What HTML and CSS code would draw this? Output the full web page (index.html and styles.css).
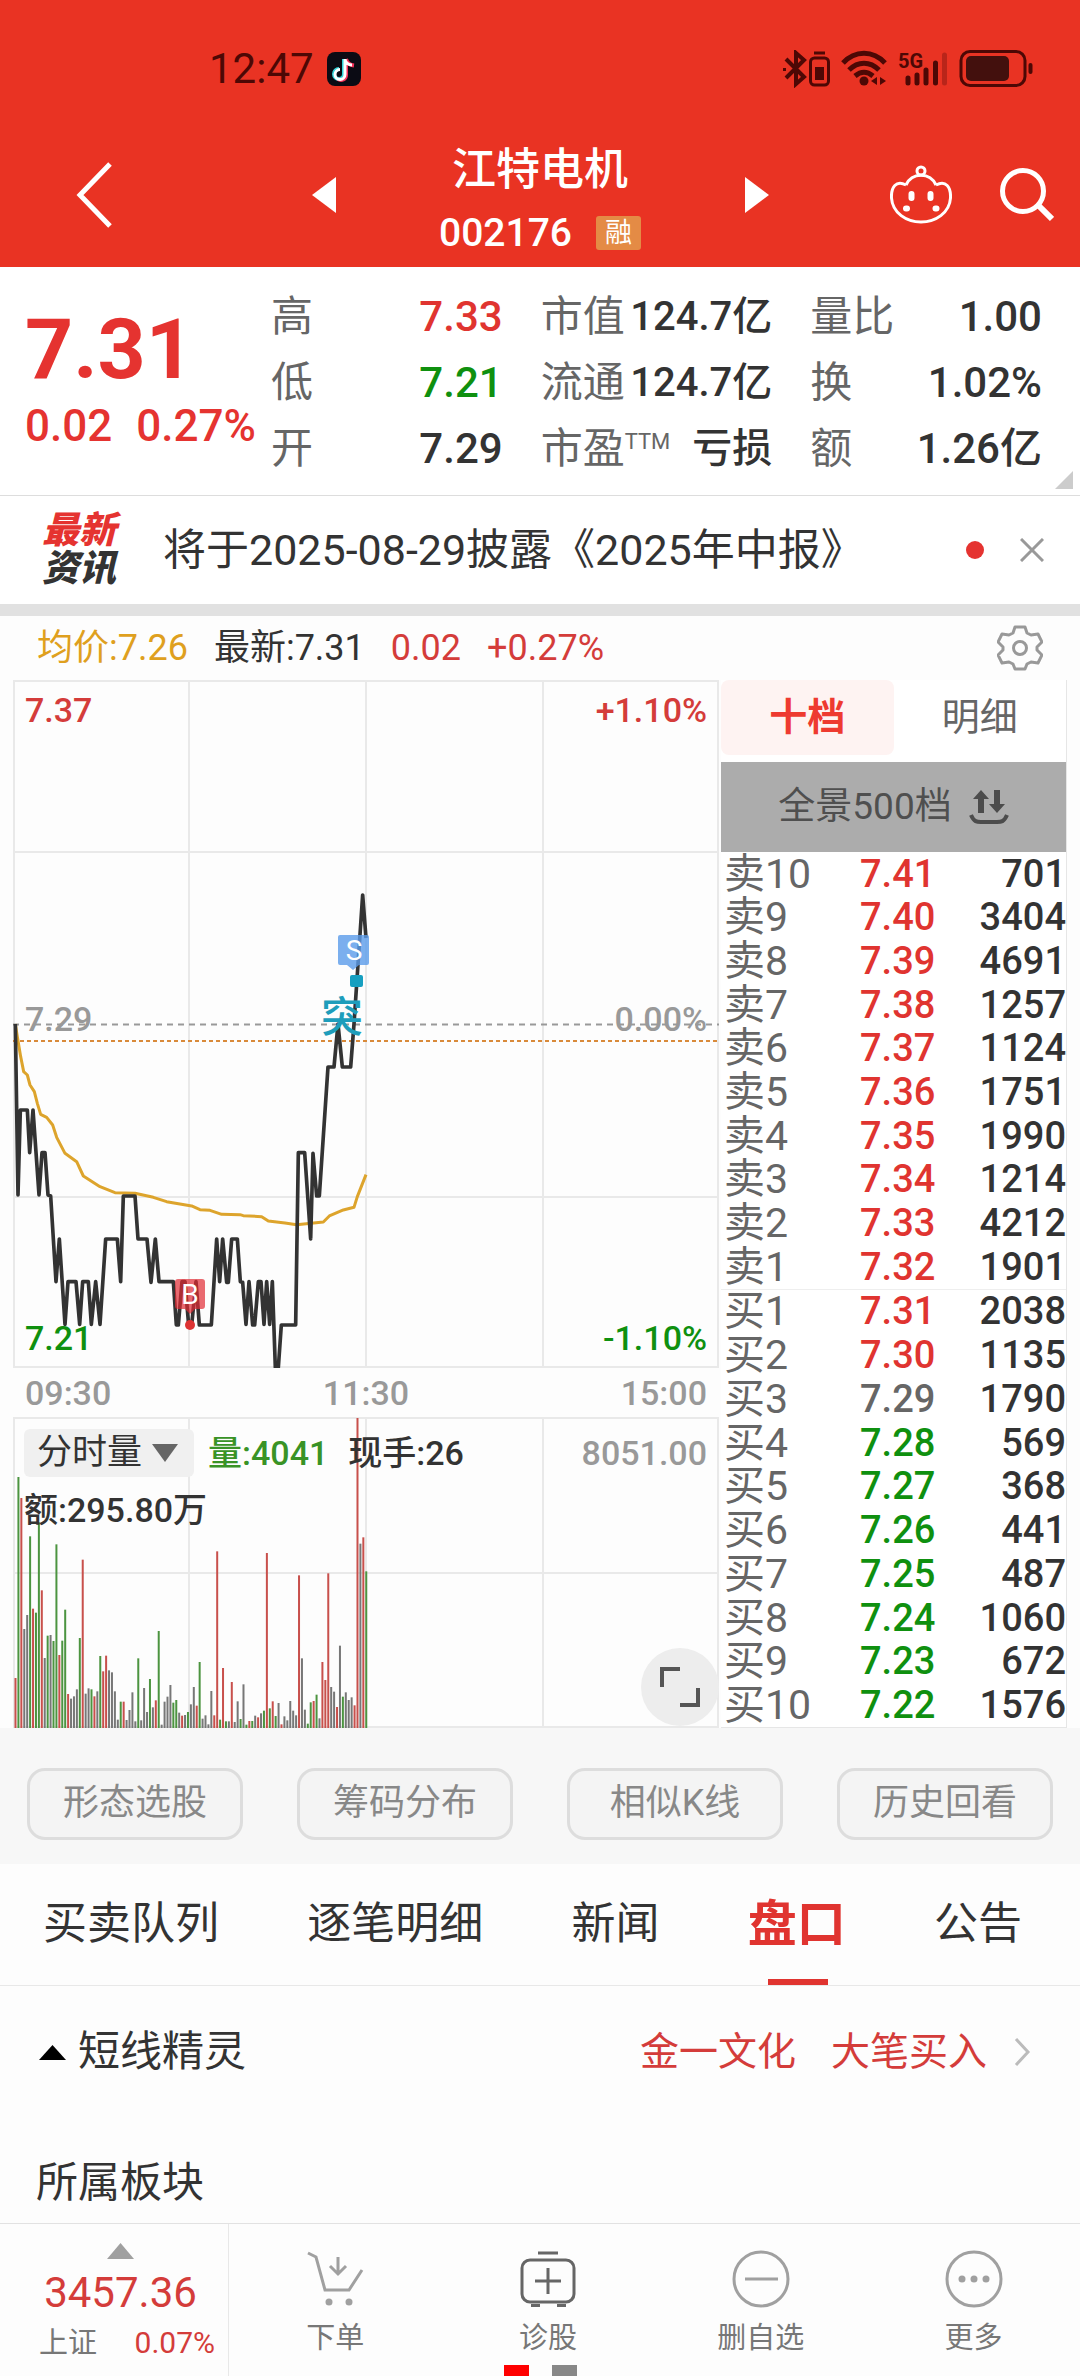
FILE: index.html
```html
<!DOCTYPE html>
<html lang="zh-CN">
<head>
<meta charset="utf-8">
<meta name="viewport" content="width=device-width, initial-scale=1">
<title>江特电机 002176</title>
<link rel="stylesheet" href="styles.css">
</head>
<body>
<header class="top">
  <div class="status">
    <div class="status-left">
      <span>12:47</span>
      <svg width="34" height="34" viewBox="0 0 34 34"><rect width="34" height="34" rx="8" fill="#0b0b14"/><g fill="none" stroke-width="4"><path d="M17 7v15a5 5 0 1 1-5-5" stroke="#35d6dc"/><path d="M19 7c1 4 4 6 8 6.500M19 8v15a5 5 0 0 1-8 4" stroke="#f5325b"/><path d="M18 7v15.500a5 5 0 1 1-5-5M18 7c0 4 4 6 7 6" stroke="#fff" stroke-width="3"/></g></svg>
    </div>
    <svg class="status-icons" width="250" height="38" viewBox="0 0 250 38" fill="none" stroke="#4d0805" stroke-width="4">
      <path d="M3 9l18 18-8 7V3l8 7L3 28M1 18v3" />
      <path d="M31 3h11" stroke-width="3"/><rect x="27.500" y="8" width="18" height="27" rx="4" stroke-width="3"/><rect x="32" y="17" width="9" height="13" fill="#4d0805" stroke="none"/>
      <path d="M60 13c12-13 30-13 42 0M66 20c9-9 21-9 30 0M72 26c6-5 12-5 18 0" stroke-width="5"/><circle cx="81" cy="31" r="4.500" fill="#4d0805" stroke="none"/><path d="M94 27v8l-6-4zM97 27v8l6-4z" fill="#4d0805" stroke="none"/>
      <text x="115" y="18" class="net">5G</text>
      <g stroke-linecap="round" stroke-width="5"><path d="M125 28v5M134 25v8M143 20v13M152.500 13v20"/><path d="M161.500 5v28" opacity=".3"/></g>
      <rect x="178" y="1.500" width="64" height="34" rx="9" stroke-width="3"/><rect x="183" y="6" width="43" height="25" rx="5" fill="#43100d" stroke="none"/><path d="M247.500 15v7" stroke-linecap="round"/>
    </svg>
  </div>
  <div class="titlebar">
    <button class="icon-btn back" aria-label="返回"><svg width="38" height="66" viewBox="0 0 38 66"><path d="M34 2L4 33l30 31" fill="none" stroke="#fff" stroke-width="5"/></svg></button>
    <div class="stock">
      <button class="icon-btn" aria-label="上一只"><svg width="24" height="36" viewBox="0 0 24 36"><path d="M24 0v36L0 18z" fill="#fff"/></svg></button>
      <div class="stock-name">
        <h1>江特电机</h1>
        <p><span>002176</span><em>融</em></p>
      </div>
      <button class="icon-btn" aria-label="下一只"><svg width="24" height="36" viewBox="0 0 24 36"><path d="M0 0v36l24-18z" fill="#fff"/></svg></button>
    </div>
    <div class="actions">
      <button class="icon-btn" aria-label="助手"><svg width="62" height="60" viewBox="0 0 62 60" fill="none" stroke="#fff" stroke-width="3"><circle cx="31" cy="6" r="4"/><path d="M16 20c6-13 24-13 30 0M16 20C6 15 1 22 1.500 33c1 15 15 24 29.500 24s28.500-9 29.500-24C61 22 56 15 46 20"/><g stroke-linecap="round" stroke-width="6"><path d="M21.500 29v4M40.500 29v4M16 43.500h1M45.500 43.500h1"/></g></svg></button>
      <button class="icon-btn" aria-label="搜索"><svg width="54" height="55" viewBox="0 0 54 55" fill="none" stroke="#fff" stroke-width="5"><circle cx="23" cy="24" r="20.500"/><path d="M38 38l14 14" stroke-width="6"/></svg></button>
    </div>
  </div>
</header>

<section class="quote">
  <div class="price">
    <strong>7.31</strong>
    <p><span>0.02</span><span>0.27%</span></p>
  </div>
  <dl class="stats">
    <div><dt>高</dt><dd class="up">7.33</dd></div>
    <div class="cap"><dt>市值</dt><dd>124.7亿</dd></div>
    <div><dt>量比</dt><dd>1.00</dd></div>
    <div><dt>低</dt><dd class="down">7.21</dd></div>
    <div class="cap"><dt>流通</dt><dd>124.7亿</dd></div>
    <div><dt>换</dt><dd>1.02%</dd></div>
    <div><dt>开</dt><dd>7.29</dd></div>
    <div class="cap"><dt>市盈<sup>TTM</sup></dt><dd>亏损</dd></div>
    <div><dt>额</dt><dd>1.26亿</dd></div>
  </dl>
  <i class="corner"></i>
</section>

<section class="news">
  <div class="news-logo"><b>最新</b><span>资讯</span></div>
  <a href="#">将于2025-08-29披露《2025年中报》</a>
  <i class="dot"></i>
  <button class="icon-btn" aria-label="关闭"><svg width="24" height="24" viewBox="0 0 24 24"><path d="M1 1l22 22M23 1L1 23" stroke="#999" stroke-width="3"/></svg></button>
</section>

<section class="info">
  <span class="avg">均价:7.26</span><span>最新:7.31</span><span class="up2">0.02</span><span class="up2">+0.27%</span>
  <button class="icon-btn gear" aria-label="设置"><svg width="46" height="46" viewBox="0 0 46 46" fill="none" stroke="#999" stroke-width="3" stroke-linejoin="round"><path d="M18 2h10l2 6 4 2 7-1 4 8-5 5v3l5 5-4 8-7-1-4 2-2 5H18l-2-5-4-2-7 1-4-8 5-5v-3l-5-5 4-8 7 1 4-2z"/><circle cx="23" cy="23" r="6.500"/></svg></button>
</section>

<main class="market">
  <div class="charts">
    <div class="plot">
      <svg viewBox="0 0 706 688">
        <g fill="none" stroke="#e9e9e9" stroke-width="2"><path d="M1 1h704v686H1zM176 0v688M353 0v688M530 0v688M0 172h706M0 517h706"/></g>
        <path d="M0 344.500h706" stroke="#999" stroke-width="2" stroke-dasharray="6 5"/>
        <path d="M0 361h706" stroke="#d98a3a" stroke-width="2" stroke-dasharray="4 3"/>
        <g transform="scale(.33333) translate(-39 960)" fill="none" stroke-linejoin="round">
          <polyline stroke="#dda42c" stroke-width="9" points="46,72 52,110 62,170 71,215 82,225 90,255 103,275 112,310 122,343 140,352 158,375 170,412 195,460 230,485 250,528 300,560 345,578 405,580 460,592 500,605 575,618 600,629 630,631 665,643 720,644 730,647 785,650 805,663 855,669 890,674 970,666 988,648 1030,630 1062,622 1072,590 1098,524"/>
          <polyline stroke="#333" stroke-width="11" points="46,72 54,585 61,330 82,330 89,458 99,330 117,585 126,458 135,458 144,585 152,588 168,845 178,717 195,973 204,845 228,845 239,973 248,845 265,845 274,973 287,845 300,973 317,717 352,717 362,845 370,588 405,588 414,717 441,717 453,847 466,717 477,845 520,845 529,975 535,975 546,845 555,845 566,975 575,975 588,845 598,975 634,975 650,717 659,845 668,717 680,847 685,847 695,717 712,717 721,845 728,847 738,973 747,845 758,975 764,975 775,845 783,845 792,973 800,845 809,973 817,845 826,1102 835,1102 844,975 887,975 895,458 914,458 932,717 939,460 950,588 958,588 984,201 1002,201 1014,72 1027,201 1052,201 1062,72 1088,-315 1098,-186"/>
        </g>
        <path d="M327 255h27q2 0 2 2v26q0 2-2 2h-8l-6 5-6-5h-7q-2 0-2-2v-26q0-2 2-2z" fill="#5a9bea" opacity=".8"/>
        <text x="341" y="280" class="flag">S</text>
        <rect x="337" y="295" width="13" height="12" rx="2" fill="#169fc0"/>
        <text x="329" y="352" class="breakout">突</text>
        <path d="M165 599h24q3 0 3 3v24q0 3-3 3h-7l-5 5-5-5h-7q-3 0-3-3v-24q0-3 3-3z" fill="#e02b33" opacity=".7"/>
        <text x="177" y="624" class="flag">B</text>
        <circle cx="177" cy="645" r="5" fill="#d33"/>
      </svg>
      <div class="scale">
        <div class="up2"><b>7.37</b><b>+1.10%</b></div>
        <div class="mid"><b>7.29</b><b>0.00%</b></div>
        <div class="down"><b>7.21</b><b>-1.10%</b></div>
      </div>
    </div>
    <div class="times"><span>09:30</span><span>11:30</span><span>15:00</span></div>
    <div class="plot">
      <svg id="volume" viewBox="0 0 706 311">
        <path d="M1 1h704v309H1zM176 0v311M353 0v311M530 0v311M0 156h706" fill="none" stroke="#e9e9e9" stroke-width="2"/>
      </svg>
      <div class="vol-info">
        <div class="vol-line">
          <button class="vol-pick">分时量<svg width="26" height="18" viewBox="0 0 26 18"><path d="M0 0h26L13 18z" fill="#666"/></svg></button>
          <span class="vol-num">量:4041</span><span>现手:26</span><span class="vol-max">8051.00</span>
        </div>
        <div class="vol-amount">额:295.80万</div>
        <button class="expand" aria-label="全屏"><svg width="40" height="40" viewBox="0 0 40 40"><path d="M2 20V2h18M38 21v17H20" fill="none" stroke="#555" stroke-width="4"/></svg></button>
      </div>
    </div>
  </div>

  <div class="book">
    <div class="book-tabs"><button class="on">十档</button><button>明细</button></div>
    <button class="depth">全景500档<svg width="40" height="36" viewBox="0 0 40 36"><path d="M12 1l8 9h-5v14H9V10H4zM28 24l8-9h-5V1h-6v14h-5z" fill="#4c4c4c"/><path d="M2 26c3 7 6 7 10 7h16c4 0 7 0 10-7" fill="none" stroke="#4c4c4c" stroke-width="4"/></svg></button>
    <table>
      <tbody class="asks">
        <tr><th>卖10</th><td class="up">7.41</td><td>701</td></tr>
        <tr><th>卖9</th><td class="up">7.40</td><td>3404</td></tr>
        <tr><th>卖8</th><td class="up">7.39</td><td>4691</td></tr>
        <tr><th>卖7</th><td class="up">7.38</td><td>1257</td></tr>
        <tr><th>卖6</th><td class="up">7.37</td><td>1124</td></tr>
        <tr><th>卖5</th><td class="up">7.36</td><td>1751</td></tr>
        <tr><th>卖4</th><td class="up">7.35</td><td>1990</td></tr>
        <tr><th>卖3</th><td class="up">7.34</td><td>1214</td></tr>
        <tr><th>卖2</th><td class="up">7.33</td><td>4212</td></tr>
        <tr><th>卖1</th><td class="up">7.32</td><td>1901</td></tr>
      </tbody>
      <tbody>
        <tr><th>买1</th><td class="up">7.31</td><td>2038</td></tr>
        <tr><th>买2</th><td class="up">7.30</td><td>1135</td></tr>
        <tr><th>买3</th><td class="flat">7.29</td><td>1790</td></tr>
        <tr><th>买4</th><td class="down">7.28</td><td>569</td></tr>
        <tr><th>买5</th><td class="down">7.27</td><td>368</td></tr>
        <tr><th>买6</th><td class="down">7.26</td><td>441</td></tr>
        <tr><th>买7</th><td class="down">7.25</td><td>487</td></tr>
        <tr><th>买8</th><td class="down">7.24</td><td>1060</td></tr>
        <tr><th>买9</th><td class="down">7.23</td><td>672</td></tr>
        <tr><th>买10</th><td class="down">7.22</td><td>1576</td></tr>
      </tbody>
    </table>
  </div>
</main>

<div class="tools"><button>形态选股</button><button>筹码分布</button><button>相似K线</button><button>历史回看</button></div>

<nav class="tabs"><a href="#">买卖队列</a><a href="#">逐笔明细</a><a href="#">新闻</a><a href="#" class="on">盘口</a><a href="#">公告</a></nav>

<section class="wizard">
  <svg width="27" height="15" viewBox="0 0 27 15"><path d="M13.500 0L27 15H0z"/></svg>
  <h2>短线精灵</h2>
  <a href="#">金一文化</a><a href="#">大笔买入</a>
  <svg class="more" width="17" height="30" viewBox="0 0 17 30"><path d="M2 2l12 13L2 28" fill="none" stroke="#bbb" stroke-width="3"/></svg>
</section>
<section class="sector"><h2>所属板块</h2></section>

<footer class="dock">
  <button class="index">
    <svg width="27" height="16" viewBox="0 0 27 16"><path d="M13.500 0L27 16H0z" fill="#a0a0a0"/></svg>
    <strong>3457.36</strong>
    <span><i>上证</i><b>0.07%</b></span>
  </button>
  <button><svg width="58" height="58" viewBox="0 0 58 58" fill="none" stroke="#a0a0a0" stroke-width="3"><path d="M2 3l8 4 9 33h24l13-20M32 7v17M24 16l8 8 8-8"/><g fill="#a0a0a0" stroke="none"><circle cx="23" cy="52" r="3.500"/><circle cx="43" cy="52" r="3.500"/></g></svg>下单</button>
  <button><svg width="58" height="58" viewBox="0 0 58 58" fill="none" stroke="#666" stroke-width="3"><rect x="3" y="10" width="52" height="42" rx="8"/><path d="M29 18v26M16 31h26M19 3h20M12 55.500h9M38 55.500h9"/></svg>诊股</button>
  <button><svg width="58" height="58" viewBox="0 0 58 58" fill="none" stroke="#a0a0a0" stroke-width="3"><circle cx="29" cy="29" r="27"/><path d="M13 29h33"/></svg>删自选</button>
  <button><svg width="58" height="58" viewBox="0 0 58 58" fill="none" stroke="#a0a0a0" stroke-width="3"><circle cx="29" cy="29" r="27"/><g fill="#a0a0a0" stroke="none"><circle cx="17" cy="29" r="3.500"/><circle cx="29" cy="29" r="3.500"/><circle cx="41" cy="29" r="3.500"/></g></svg>更多</button>
  <div class="pager"><i></i><i></i></div>
</footer>
<script src="volume.js"></script>
</body>
</html>
```
FILE: styles.css
```css
* { box-sizing: border-box; margin: 0; padding: 0; }
body {
  min-height: 100vh;
  display: flex;
  flex-direction: column;
  background: #fdfdfd;
  color: #333;
  font-family: Roboto, "Noto Sans CJK SC", sans-serif;
  line-height: 1.2;
}
button { border: 0; background: none; font: inherit; color: inherit; }
a { color: inherit; text-decoration: none; }
i, em { font-style: normal; }
svg { display: block; flex: none; }
.up { color: #e03430; }
.up2 { color: #d43c3a; }
.down { color: #0f900f; }
.flat { color: #666; }

.top { background: #e93323; color: #fff; }
.status {
  height: 138px;
  display: flex;
  justify-content: space-between;
  align-items: center;
  padding: 0 47px 0 209px;
}
.status-left { display: flex; align-items: center; gap: 13px; color: #4d0805; font-size: 42px; line-height: 44px; }
.net { fill: #4d0805; stroke: none; font-size: 20px; font-weight: 700; }
.titlebar { display: grid; grid-template-columns: 1fr 457px 1fr; align-items: center; height: 129px; }
.titlebar .icon-btn { margin-bottom: 16px; }
.back { justify-self: start; padding-left: 76px; }
.stock { display: flex; justify-content: space-between; align-items: center; }
.stock-name { text-align: center; }
.stock-name h1 { font-size: 44px; line-height: 60px; font-weight: 500; }
.stock-name p { display: flex; gap: 24px; align-items: center; justify-content: center; font-size: 39px; line-height: 66px; font-weight: 500; }
.stock-name em { background: #e48b45; border-radius: 3px; padding: 0 9px; font-size: 27px; line-height: 34px; font-weight: 400; }
.actions { display: flex; align-items: center; justify-content: flex-end; gap: 48px; padding-right: 26px; }

.quote { position: relative; display: flex; padding: 17px 38px 13px 25px; border-bottom: 1px solid #ddd; background: #fff; }
.price { width: 246px; color: #e53330; font-weight: 500; padding-top: 18px; white-space: nowrap; }
.price strong { display: block; font-size: 84px; line-height: 96px; font-weight: 700; }
.price p { display: flex; gap: 24px; font-size: 44px; line-height: 56px; }
.stats { flex: 1; display: grid; grid-template-columns: repeat(3, 1fr); column-gap: 38px; }
.stats div { display: flex; justify-content: space-between; font-size: 42px; line-height: 66px; white-space: nowrap; }
.stats dt { color: #666; }
.stats dd { font-weight: 500; }
.stats .cap dd { font-size: 40px; }
.stats sup { font-size: 22px; line-height: 22px; vertical-align: 14px; }
.corner { position: absolute; right: 7px; bottom: 6px; border-left: 18px solid transparent; border-bottom: 18px solid #ccc; }

.news { display: flex; align-items: center; height: 108px; padding: 0 36px 0 42px; background: #fff; }
.news-logo { width: 121px; font-size: 37px; line-height: 38px; font-style: italic; }
.news-logo b, .news-logo span { display: block; font-weight: 900; }
.news-logo b { color: #e53330; }
.news a { flex: 1; font-size: 43px; line-height: 60px; }
.dot { width: 18px; height: 18px; border-radius: 50%; background: #e53330; margin-right: 36px; }

.info { display: flex; gap: 26px; align-items: center; height: 76px; padding: 0 37px; border-top: 12px solid #e1e1e1; font-size: 36px; line-height: 50px; }
.avg { color: #dfa01e; }
.gear { margin-left: auto; }

.market { display: grid; grid-template-columns: 706fr 346fr; gap: 2px; padding: 0 13px; }
.plot { display: grid; }
.plot > * { grid-area: 1 / 1; min-width: 0; }
.plot > svg { width: 100%; height: auto; }
.flag { fill: #fff; font-size: 28px; text-anchor: middle; }
.breakout { fill: #1e9dbb; font-size: 42px; font-weight: 500; text-anchor: middle; }
.scale { display: flex; flex-direction: column; justify-content: space-between; padding: 8px 12px; font-size: 34px; line-height: 44px; }
.scale div { display: flex; justify-content: space-between; }
.scale b { font-weight: 500; }
.scale .mid { color: #999; padding-bottom: 10px; }
.times { display: grid; grid-template-columns: 1fr 1fr 1fr; height: 49px; padding: 0 12px; color: #999; font-size: 34px; line-height: 50px; font-weight: 500; }
.times span:nth-child(2) { text-align: center; }
.times span:nth-child(3) { text-align: right; }
.vol-info { display: flex; flex-direction: column; padding: 12px 12px 0 11px; font-size: 34px; font-weight: 500; }
.vol-line { display: flex; align-items: center; line-height: 48px; }
.vol-pick { display: flex; align-items: center; gap: 10px; padding: 0 16px 0 13px; margin-right: 14px; border-radius: 6px; background: #f0f0f0; font-size: 35px; font-weight: 400; }
.vol-num { color: #399326; margin-right: 20px; }
.vol-max { margin-left: auto; color: #999; }
.vol-amount { line-height: 66px; }
.expand { width: 78px; height: 78px; margin: auto -12px 2px auto; border-radius: 50%; background: #ededed; display: grid; place-items: center; }

.book { display: flex; flex-direction: column; border-right: 1px solid #e6e6e6; background: #fff; }
.book-tabs { display: flex; margin-bottom: 7px; }
.book-tabs button { flex: 1; height: 75px; font-size: 38px; color: #666; border-radius: 8px; }
.book-tabs .on { background: #fef3f2; color: #ee3a30; font-weight: 700; }
.depth { display: flex; justify-content: center; align-items: center; gap: 17px; height: 90px; background: #acacac; color: #4f4f4f; font-size: 37px; }
.book table { flex: 1; display: grid; grid-template-rows: 1fr 1fr; border-bottom: 1px solid #e6e6e6; }
.book tbody { display: grid; grid-auto-rows: 1fr; }
.book .asks { border-bottom: 1px solid #eee; }
.book tr { display: grid; grid-template-columns: 136px 1fr 1fr; align-items: center; font-size: 38px; line-height: 40px; padding-left: 3px; }
.book th { font-size: 41px; font-weight: 400; color: #666; text-align: left; }
.book td { font-weight: 500; }
.book td:last-child { text-align: right; }

.tools { display: grid; grid-template-columns: repeat(4, 1fr); gap: 54px; padding: 40px 27px 24px; background: #f7f7f7; }
.tools button { height: 72px; border: 3px solid #ddd; border-radius: 18px; background: #f4f4f4; color: #888; font-size: 36px; }

.tabs { display: flex; justify-content: space-between; padding: 0 58px 0 43px; border-bottom: 1px solid #e8e8e8; font-size: 44px; line-height: 121px; }
.tabs .on { position: relative; font-size: 49px; font-weight: 700; color: #e03430; }
.tabs .on::after { content: ""; position: absolute; left: 20px; right: 18px; bottom: 0; height: 6px; background: #e03430; }

.wizard { display: flex; align-items: center; height: 132px; padding: 0 49px 0 39px; }
.wizard h2, .sector h2 { font-size: 42px; line-height: 60px; font-weight: 400; }
.wizard h2 { margin: 0 auto 0 12px; }
.wizard a { margin-left: 35px; color: #d43c3a; font-size: 39px; line-height: 60px; }
.more { margin-left: 27px; }
.sector { padding: 35px 36px 9px; }

.dock { position: relative; display: grid; grid-template-columns: 229px repeat(4, 1fr); margin-top: auto; height: 153px; border-top: 1px solid #e2e2e2; font-size: 29px; color: #777; }
.dock button { display: flex; flex-direction: column; align-items: center; gap: 8px; padding-top: 26px; line-height: 44px; }
.dock .index { gap: 6px; padding: 19px 13px 0 26px; border-right: 1px solid #e8e8e8; }
.index strong { font-size: 42px; line-height: 56px; font-weight: 400; color: #d43c3a; }
.index span { align-self: stretch; display: flex; justify-content: space-between; padding-left: 13px; line-height: 32px; }
.index b { font-size: 30px; font-weight: 400; color: #d43c3a; }
.pager { position: absolute; left: 0; right: 0; bottom: 0; display: flex; justify-content: center; gap: 23px; }
.pager i { width: 25px; height: 11px; background: #888; }
.pager i:first-child { background: #f00; }
```
FILE: volume.js
```javascript
// Per-minute volume, one entry per bar: colour key + bar height.
const bars = ("r150 g753 r690 k297 k339 g575 r358 g346 g617 r413 k210 g277 k279 g261 g551 r219 g262 g355 r102 k88 k95 k116 g270 r505 " +
  "k103 k119 g116 r95 k110 g216 r170 r217 k173 k167 k110 k25 g79 r79 k24 k54 k107 k20 g209 k23 k120 k48 g147 k62 r83 g291 " +
  "k10 k79 k94 k129 g76 g84 k46 r37 k39 g48 k71 k123 r67 g198 k28 k38 k11 k111 r38 r530 g25 r180 g20 k20 r138 k18 k80 g27 " +
  "k131 g10 r21 g21 k37 r32 k44 g52 r525 g59 r80 g36 k75 r11 k35 k23 k81 k52 k38 r458 k209 k55 g13 g77 r81 g100 k29 r198 " +
  "r144 r464 k123 k109 r63 k247 g94 k107 k84 k92 r68 r930 k553 r572 g470").split(" ");
const colours = { r: "#c8504c", g: "#4c9440", k: "#777" };
const chart = document.getElementById("volume");
bars.forEach((bar, i) => {
  const h = Number(bar.slice(1)) / 3;
  const rect = document.createElementNS("http://www.w3.org/2000/svg", "rect");
  rect.setAttribute("x", 1.5 + i * 2.923);
  rect.setAttribute("y", 311 - h);
  rect.setAttribute("width", 2);
  rect.setAttribute("height", h);
  rect.setAttribute("fill", colours[bar[0]]);
  chart.appendChild(rect);
});
```
